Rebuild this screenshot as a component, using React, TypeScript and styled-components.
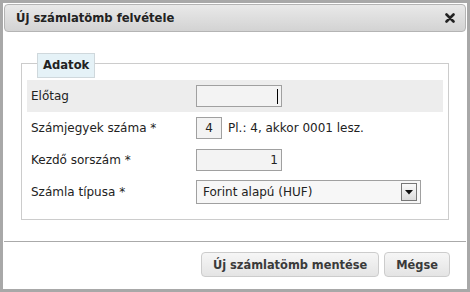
import styled, { createGlobalStyle } from 'styled-components'

const GlobalStyle = createGlobalStyle`
  html, body {
    margin: 0;
    padding: 0;
    background: #ffffff;
  }
  body {
    font-family: Verdana, "DejaVu Sans", sans-serif;
    color: #222;
  }
`

const Dialog = styled.div`
  width: 470px;
  height: 292px;
  box-sizing: border-box;
  border: 3px solid #a8a8a8;
  padding: 1px;
  background: #fff;
  display: flex;
  flex-direction: column;
`

const TitleBar = styled.div`
  height: 28px;
  box-sizing: border-box;
  display: flex;
  align-items: center;
  justify-content: space-between;
  padding: 0 10px 0 11px;
  border: 1px solid #b4b4b4;
  border-radius: 4px;
  background: linear-gradient(#e9e9e9, #d3d3d3);
`

const Title = styled.span`
  font-weight: 700;
  font-size: 11.6px;
  color: #222;
`

const CloseIcon = styled.svg`
  width: 10px;
  height: 10px;
`

const Body = styled.div`
  padding: 21px 17px 0 17px;
  height: 209px;
  box-sizing: border-box;
`

const Fieldset = styled.div`
  border: 1px solid #cccccc;
  margin-top: 10px;
  padding: 0 5px 11px 5px;
`

const Legend = styled.div`
  width: fit-content;
  margin: -11px 0 2px 10px;
  height: 25px;
  box-sizing: border-box;
  padding: 0 5px;
  line-height: 23px;
  border: 1px solid #cfd8dc;
  background: #e5f2f7;
  font-weight: 700;
  font-size: 11.6px;
  color: #222;
`

const Row = styled.div<{ $shaded?: boolean }>`
  height: 32px;
  display: flex;
  align-items: center;
  background: ${({ $shaded }) => ($shaded ? '#ededed' : 'transparent')};
`

const Label = styled.div`
  width: 165px;
  padding-left: 4px;
  font-size: 12px;
  color: #222;
`

const Input = styled.div<{ $width: number; $align?: string }>`
  width: ${({ $width }) => $width}px;
  height: 22px;
  box-sizing: border-box;
  border: 1px solid #a0a0a0;
  background: #f3f3f3;
  font-size: 12px;
  padding: 0 3px;
  display: flex;
  align-items: center;
  justify-content: ${({ $align }) => ($align === 'center' ? 'center' : 'flex-end')};
`

const Caret = styled.span`
  display: inline-block;
  width: 1px;
  height: 15px;
  background: #000;
`

const Hint = styled.span`
  margin-left: 6px;
  font-size: 12px;
  color: #222;
`

const Select = styled.div`
  width: 225px;
  height: 24px;
  box-sizing: border-box;
  border: 1px solid #a0a0a0;
  background: #f7f7f7;
  display: flex;
  align-items: center;
  justify-content: space-between;
  padding: 0 3px 0 6px;
  font-size: 12px;
  color: #222;
`

const SelectButton = styled.div`
  width: 16px;
  height: 18px;
  box-sizing: border-box;
  border: 1px solid #777;
  background: linear-gradient(#fafafa, #dcdcdc);
  display: flex;
  align-items: center;
  justify-content: center;
`

const Divider = styled.div`
  height: 1px;
  background: #aaaaaa;
`

const ButtonPane = styled.div`
  display: flex;
  justify-content: flex-end;
  gap: 5px;
  padding: 10px 16px 0 0;
`

const Button = styled.button`
  height: 25px;
  box-sizing: border-box;
  padding: 0 11px;
  border: 1px solid #cccccc;
  border-radius: 4px;
  background: linear-gradient(#f6f6f6, #e4e4e4);
  font-family: Verdana, "DejaVu Sans", sans-serif;
  font-weight: 700;
  font-size: 11.4px;
  color: #3a3a3a;
`

export default function App(): JSX.Element {
  return (
    <>
      <GlobalStyle />
      <Dialog>
        <TitleBar>
          <Title>Új számlatömb felvétele</Title>
          <CloseIcon viewBox="0 0 10 10">
            <path d="M1.5 1.5 L8.5 8.5 M8.5 1.5 L1.5 8.5" stroke="#222" strokeWidth="2.6" strokeLinecap="round" />
          </CloseIcon>
        </TitleBar>

        <Body>
          <Fieldset>
            <Legend>Adatok</Legend>
            <Row $shaded>
              <Label>Előtag</Label>
              <Input $width={86}>
                <Caret />
              </Input>
            </Row>
            <Row>
              <Label>Számjegyek száma *</Label>
              <Input $width={26} $align="center">
                4
              </Input>
              <Hint>Pl.: 4, akkor 0001 lesz.</Hint>
            </Row>
            <Row>
              <Label>Kezdő sorszám *</Label>
              <Input $width={86}>1</Input>
            </Row>
            <Row>
              <Label>Számla típusa *</Label>
              <Select>
                <span>Forint alapú (HUF)</span>
                <SelectButton>
                  <svg width="8" height="5" viewBox="0 0 8 5">
                    <path d="M0 0 H8 L4 4.5 Z" fill="#111" />
                  </svg>
                </SelectButton>
              </Select>
            </Row>
          </Fieldset>
        </Body>

        <Divider />
        <ButtonPane>
          <Button>Új számlatömb mentése</Button>
          <Button>Mégse</Button>
        </ButtonPane>
      </Dialog>
    </>
  )
}
